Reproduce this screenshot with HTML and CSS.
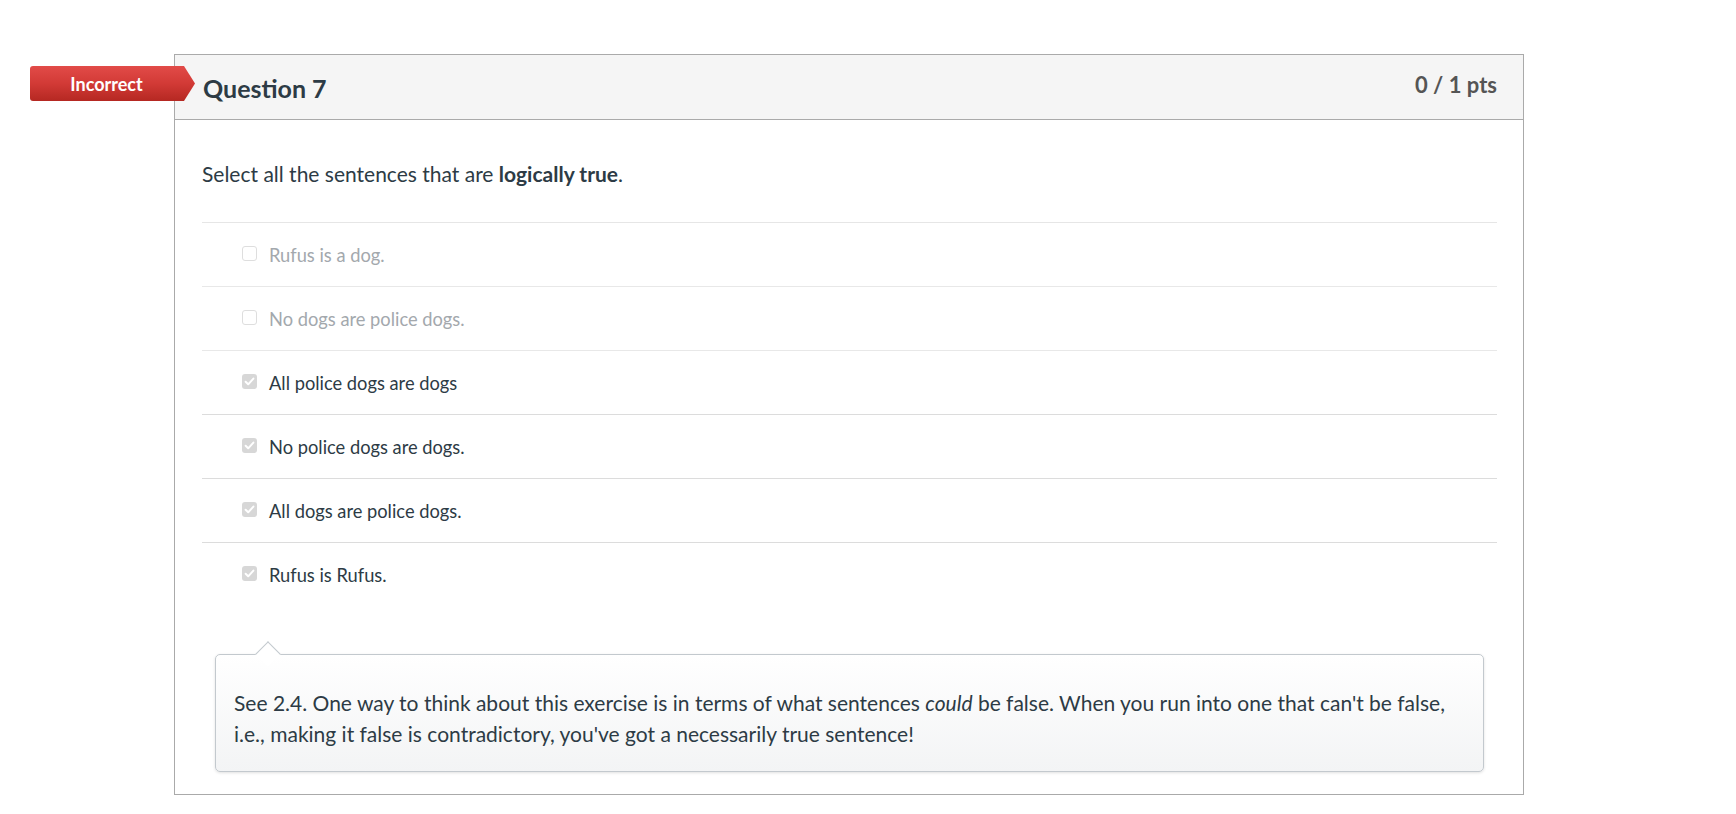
FILE: index.html
```html
<!DOCTYPE html>
<html>
<head>
<meta charset="utf-8">
<link rel="stylesheet" href="styles.css">
</head>
<body>
<div class="page">
  <div class="question">
    <div class="badge">Incorrect</div>
    <div class="q-header">
      <h2 class="q-title">Question 7</h2>
      <div class="q-points">0 / 1 pts</div>
    </div>
    <div class="q-body">
      <p class="q-text">Select all the sentences that are <strong>logically true</strong>.</p>
      <div class="answers">
        <div class="answer muted"><span class="cb"></span><span>Rufus is a dog.</span></div>
        <div class="answer muted"><span class="cb"></span><span>No dogs are police dogs.</span></div>
        <div class="answer"><span class="cb checked"><svg viewBox="0 0 15 15" width="15" height="15"><path d="M3.6 7.8 L6.2 10.3 L11.4 4.6" fill="none" stroke="#fff" stroke-width="2" stroke-linecap="round" stroke-linejoin="round"/></svg></span><span>All police dogs are dogs</span></div>
        <div class="answer"><span class="cb checked"><svg viewBox="0 0 15 15" width="15" height="15"><path d="M3.6 7.8 L6.2 10.3 L11.4 4.6" fill="none" stroke="#fff" stroke-width="2" stroke-linecap="round" stroke-linejoin="round"/></svg></span><span>No police dogs are dogs.</span></div>
        <div class="answer"><span class="cb checked"><svg viewBox="0 0 15 15" width="15" height="15"><path d="M3.6 7.8 L6.2 10.3 L11.4 4.6" fill="none" stroke="#fff" stroke-width="2" stroke-linecap="round" stroke-linejoin="round"/></svg></span><span>All dogs are police dogs.</span></div>
        <div class="answer"><span class="cb checked"><svg viewBox="0 0 15 15" width="15" height="15"><path d="M3.6 7.8 L6.2 10.3 L11.4 4.6" fill="none" stroke="#fff" stroke-width="2" stroke-linecap="round" stroke-linejoin="round"/></svg></span><span>Rufus is Rufus.</span></div>
      </div>
      <div class="comment">
        <p>See 2.4. One way to think about this exercise is in terms of what sentences <em>could</em> be false. When you run into one that can't be false, i.e., making it false is contradictory, you've got a necessarily true sentence!</p>
      </div>
    </div>
  </div>
</div>
</body>
</html>
```

FILE: styles.css
```css
* { box-sizing: border-box; }
html, body { margin: 0; padding: 0; background: #fff; }
body {
  font-family: Lato, "Open Sans", "Liberation Sans", sans-serif;
  color: #2d3b45;
}
.page {
  padding: 54px 0 0 174px;
}
.question {
  position: relative;
  width: 1350px;
  border: 1px solid #aaaaaa;
  background: #fff;
}
.badge {
  position: absolute;
  left: -145px;
  top: 11px;
  width: 165px;
  height: 35px;
  padding-right: 12px;
  display: flex;
  align-items: center;
  justify-content: center;
  color: #fff;
  font-weight: 700;
  font-size: 18px;
  background: linear-gradient(to bottom, #e24b48 0%, #d23a36 50%, #b52822 100%);
  border-radius: 3px 0 0 3px;
  clip-path: polygon(0 0, 154px 0, 100% 50%, 154px 100%, 0 100%);
}
.q-header {
  display: flex;
  justify-content: space-between;
  align-items: flex-start;
  height: 65px;
  padding: 16px 26px 0 28px;
  background: #f5f5f5;
  border-bottom: 1px solid #aaaaaa;
}
.q-title {
  margin: 0;
  font-size: 25px;
  font-weight: 700;
  line-height: normal;
  color: #2d3b45;
  padding-top: 2px;
}
.q-points {
  font-size: 22px;
  font-weight: 700;
  line-height: normal;
  color: #555555;
}
.q-body {
  padding: 39px 26px 22px 27px;
}
.q-text {
  margin: 0 0 33px;
  font-size: 21px;
  line-height: 30px;
}
.q-text strong { font-weight: 700; }
.answers {
  border-top: 1px solid #e6e6e6;
}
.answer {
  display: flex;
  align-items: center;
  gap: 12px;
  height: 64px;
  padding-left: 40px;
  font-size: 18.3px;
  border-bottom: 1px solid #dcdcdc;
}
.answer:last-child { border-bottom: none; }
.answer.muted { color: #a3a8ad; border-bottom-color: #e8e8e8; }
.cb {
  flex: none;
  width: 15px;
  height: 15px;
  border: 1px solid #dedede;
  border-radius: 3px;
  background: #fff;
  display: flex;
  margin-top: -3px;
}
.cb.checked {
  border: none;
  background: #d7d7d7;
}
.cb svg { display: block; }
.comment {
  position: relative;
  margin: 47px 13px 0 13px;
  padding: 32px 18px 22px 18px;
  border: 1px solid #c3c9ce;
  border-radius: 5px;
  background: linear-gradient(to bottom, #ffffff 0%, #f3f4f5 100%);
  box-shadow: 0 1px 3px rgba(0,0,0,0.12);
}
.comment::before {
  content: "";
  position: absolute;
  left: 43px;
  top: -10px;
  width: 17px;
  height: 17px;
  background: #fff;
  border-left: 1px solid #c3c9ce;
  border-top: 1px solid #c3c9ce;
  transform: rotate(45deg);
  transform-origin: center;
}
.comment p {
  margin: 0;
  font-size: 21px;
  line-height: 31px;
  color: #2d3b45;
}
```
